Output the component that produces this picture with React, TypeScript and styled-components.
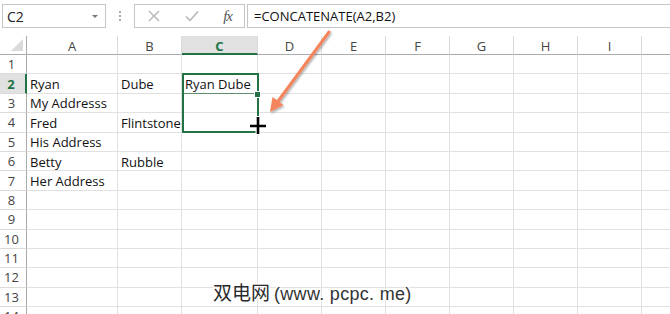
import React from "react";
import styled, { createGlobalStyle } from "styled-components";

const GlobalStyle = createGlobalStyle`
  html, body { margin: 0; padding: 0; background: #fff; }
  body { font-family: "Open Sans", "Liberation Sans", sans-serif; overflow: hidden; }
`;

const Page = styled.div`
  position: relative;
  width: 670px;
  height: 314px;
  overflow: hidden;
  background: #fff;
`;

const FormulaBar = styled.div`
  display: flex;
  height: 24px;
  padding: 4px 0 0 2px;
`;

const NameBox = styled.div`
  width: 104px;
  box-sizing: border-box;
  border: 1px solid #c6c6c6;
  display: flex;
  align-items: center;
  justify-content: space-between;
  padding: 0 7px 0 4px;
  font-size: 14px;
  color: #222;
`;

const DropArrow = styled.span`
  width: 0;
  height: 0;
  border-left: 3px solid transparent;
  border-right: 3px solid transparent;
  border-top: 3px solid #777;
`;

const Grip = styled.div`
  width: 28px;
  display: flex;
  flex-direction: column;
  align-items: center;
  justify-content: center;
  gap: 2px;
`;

const Dot = styled.span`
  width: 2px;
  height: 2px;
  background: #a8a8a8;
`;

const FnButtons = styled.div`
  width: 111px;
  box-sizing: border-box;
  border: 1px solid #c6c6c6;
  display: flex;
  align-items: center;
  justify-content: space-between;
  padding: 0 12px 0 13px;
`;

const FxLabel = styled.span`
  font-family: "Liberation Serif", serif;
  font-style: italic;
  font-size: 15px;
  color: #555;
  letter-spacing: -1px;
`;

const FormulaInput = styled.div`
  flex: 1;
  margin-left: 2px;
  box-sizing: border-box;
  border: 1px solid #c6c6c6;
  border-right: none;
  padding-left: 6px;
  display: flex;
  align-items: center;
  font-size: 13px;
  color: #111;
`;

const Sheet = styled.div`
  margin-top: 8px;
  display: grid;
  grid-template-columns: 27px 91px 64px 76px 64px 64px 64px 64px 64px 64px 64px;
  grid-template-rows: 19px;
  grid-auto-rows: 19.4px;
`;

const Corner = styled.div`
  position: relative;
  box-sizing: border-box;
  border-right: 1px solid #ababab;
  border-bottom: 1px solid #ababab;
  &::after {
    content: "";
    position: absolute;
    right: 3px;
    bottom: 3px;
    width: 0;
    height: 0;
    border-left: 12px solid transparent;
    border-bottom: 12px solid #dadada;
  }
`;

const ColHead = styled.div<{ $active?: boolean }>`
  box-sizing: border-box;
  display: flex;
  align-items: center;
  justify-content: center;
  font-size: 13px;
  padding-top: 2px;
  background: ${(p) => (p.$active ? "#e1e1e1" : "#fff")};
  color: ${(p) => (p.$active ? "#217346" : "#444")};
  font-weight: ${(p) => (p.$active ? 700 : 400)};
  border-right: 1px solid #dadada;
  border-bottom: ${(p) => (p.$active ? "2px solid #217346" : "1px solid #ababab")};
`;

const RowHead = styled.div<{ $active?: boolean }>`
  box-sizing: border-box;
  display: flex;
  align-items: center;
  justify-content: center;
  font-size: 13px;
  padding-right: 3px;
  background: ${(p) => (p.$active ? "#e1e1e1" : "#fff")};
  color: ${(p) => (p.$active ? "#217346" : "#444")};
  font-weight: ${(p) => (p.$active ? 700 : 400)};
  border-right: ${(p) => (p.$active ? "2px solid #217346" : "1px solid #ababab")};
  border-bottom: 1px solid #dadada;
`;

const Cell = styled.div`
  box-sizing: border-box;
  display: flex;
  align-items: center;
  padding: 1px 0 0 3px;
  font-size: 13px;
  color: #111;
  white-space: nowrap;
  border-right: 1px solid #e1e1e1;
  border-bottom: 1px solid #e1e1e1;
`;

const Selection = styled.div`
  position: absolute;
  left: 182px;
  top: 73px;
  width: 77px;
  height: 60px;
  box-sizing: border-box;
  border: 2px solid #217346;
  pointer-events: none;
`;

const ActiveLine = styled.div`
  position: absolute;
  left: 0;
  right: 0;
  top: 18px;
  height: 1px;
  background: #5d8f70;
`;

const FillHandle = styled.div`
  position: absolute;
  right: -4px;
  top: 16px;
  width: 5px;
  height: 5px;
  background: #217346;
  border: 1px solid #fff;
`;

const Overlay = styled.svg`
  position: absolute;
  left: 0;
  top: 0;
  pointer-events: none;
`;

const Watermark = styled.div`
  position: absolute;
  left: 213px;
  top: 278px;
  display: flex;
  align-items: baseline;
  font-family: "Noto Sans CJK SC", "Liberation Sans", sans-serif;
  font-size: 19px;
  color: #2a2a2a;
  white-space: nowrap;
  text-shadow: -1px -1px 0 #fff, 1px -1px 0 #fff, -1px 1px 0 #fff, 1px 1px 0 #fff, 0 1px 0 #fff, 1px 0 0 #fff, -1px 0 0 #fff, 0 -1px 0 #fff;
`;

const WatermarkLatin = styled.span`
  font-family: "Liberation Sans", sans-serif;
  font-size: 18px;
  margin-left: 4px;
  letter-spacing: 0.3px;
  color: #333;
`;

const cols = ["A", "B", "C", "D", "E", "F", "G", "H", "I", ""];
const data: Record<number, Record<string, string>> = {
  2: { A: "Ryan", B: "Dube", C: "Ryan Dube" },
  3: { A: "My Addresss" },
  4: { A: "Fred", B: "Flintstone" },
  5: { A: "His Address" },
  6: { A: "Betty", B: "Rubble" },
  7: { A: "Her Address" },
};
const rows = Array.from({ length: 14 }, (_, i) => i + 1);

export default function App() {
  return (
    <>
      <GlobalStyle />
      <Page>
        <FormulaBar>
          <NameBox>
            <span>C2</span>
            <DropArrow />
          </NameBox>
          <Grip>
            <Dot />
            <Dot />
            <Dot />
          </Grip>
          <FnButtons>
            <svg width="12" height="12" viewBox="0 0 12 12">
              <path d="M1 1L11 11M11 1L1 11" stroke="#b4b4b4" strokeWidth="1.3" fill="none" />
            </svg>
            <svg width="14" height="12" viewBox="0 0 14 12">
              <path d="M1 6.5L5 10.5L13 1.5" stroke="#b4b4b4" strokeWidth="1.5" fill="none" />
            </svg>
            <FxLabel>fx</FxLabel>
          </FnButtons>
          <FormulaInput>=CONCATENATE(A2,B2)</FormulaInput>
        </FormulaBar>
        <Sheet>
          <Corner />
          {cols.map((c, i) => (
            <ColHead key={"h" + i} $active={c === "C"}>
              {c}
            </ColHead>
          ))}
          {rows.map((r) => (
            <React.Fragment key={r}>
              <RowHead $active={r === 2}>{r}</RowHead>
              {cols.map((c, i) => (
                <Cell key={i}>{(data[r] && data[r][c]) || ""}</Cell>
              ))}
            </React.Fragment>
          ))}
        </Sheet>
        <Selection>
          <ActiveLine />
          <FillHandle />
        </Selection>
        <Overlay width="670" height="314" viewBox="0 0 670 314">
          <defs>
            <filter id="sh" x="-20%" y="-20%" width="140%" height="140%">
              <feDropShadow dx="1" dy="1.5" stdDeviation="1.2" floodColor="#000" floodOpacity="0.35" />
            </filter>
          </defs>
          <g filter="url(#sh)">
            <line x1="329" y1="32" x2="276" y2="104" stroke="#f4845c" strokeWidth="3" strokeLinecap="round" />
            <path d="M270 112 L272.5 97 L283.5 105 Z" fill="#f4845c" />
          </g>
          <g>
            <path d="M258 116 V135 M249 126 H267" stroke="#fff" strokeWidth="5" />
            <path d="M258 117 V134 M250 126 H266" stroke="#000" strokeWidth="2.6" />
          </g>
        </Overlay>
        <Watermark>
          双电网<WatermarkLatin>(www. pcpc. me)</WatermarkLatin>
        </Watermark>
      </Page>
    </>
  );
}
